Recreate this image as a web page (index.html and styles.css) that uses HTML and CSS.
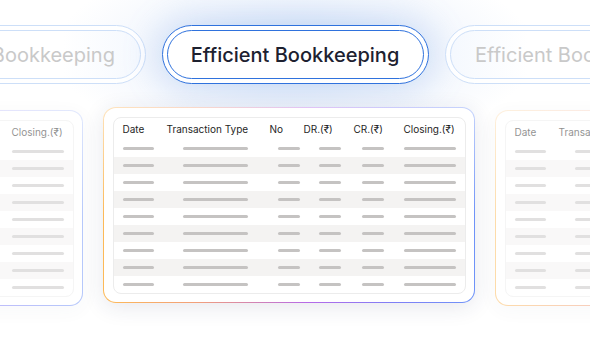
FILE: index.html
```html
<!DOCTYPE html>
<html lang="en">
<head>
<meta charset="utf-8">
<title>Efficient Bookkeeping</title>
<link rel="stylesheet" href="styles.css">
</head>
<body>
<div class="stage">
  <div class="pills">
    <div class="pill"><div class="pill-in">Efficient Bookkeeping</div></div>
    <div class="pill pill--active"><div class="pill-in">Efficient Bookkeeping</div></div>
    <div class="pill"><div class="pill-in">Efficient Bookkeeping</div></div>
  </div>

  <div class="cards">
    <div class="card card--side">
      <div class="sheet">
        <div class="grid head"><span>Date</span><span>Transaction Type</span><span>No</span><span>DR.(₹)</span><span>CR.(₹)</span><span>Closing.(₹)</span></div>
        <div class="grid row"><i class="bar b1"></i><i class="bar b2"></i><i class="bar b3"></i><i class="bar b4"></i><i class="bar b5"></i><i class="bar b6"></i></div>
        <div class="grid row"><i class="bar b1"></i><i class="bar b2"></i><i class="bar b3"></i><i class="bar b4"></i><i class="bar b5"></i><i class="bar b6"></i></div>
        <div class="grid row"><i class="bar b1"></i><i class="bar b2"></i><i class="bar b3"></i><i class="bar b4"></i><i class="bar b5"></i><i class="bar b6"></i></div>
        <div class="grid row"><i class="bar b1"></i><i class="bar b2"></i><i class="bar b3"></i><i class="bar b4"></i><i class="bar b5"></i><i class="bar b6"></i></div>
        <div class="grid row"><i class="bar b1"></i><i class="bar b2"></i><i class="bar b3"></i><i class="bar b4"></i><i class="bar b5"></i><i class="bar b6"></i></div>
        <div class="grid row"><i class="bar b1"></i><i class="bar b2"></i><i class="bar b3"></i><i class="bar b4"></i><i class="bar b5"></i><i class="bar b6"></i></div>
        <div class="grid row"><i class="bar b1"></i><i class="bar b2"></i><i class="bar b3"></i><i class="bar b4"></i><i class="bar b5"></i><i class="bar b6"></i></div>
        <div class="grid row"><i class="bar b1"></i><i class="bar b2"></i><i class="bar b3"></i><i class="bar b4"></i><i class="bar b5"></i><i class="bar b6"></i></div>
        <div class="grid row"><i class="bar b1"></i><i class="bar b2"></i><i class="bar b3"></i><i class="bar b4"></i><i class="bar b5"></i><i class="bar b6"></i></div>
      </div>
    </div>

    <div class="card card--main">
      <div class="sheet">
        <div class="grid head"><span>Date</span><span>Transaction Type</span><span>No</span><span>DR.(₹)</span><span>CR.(₹)</span><span>Closing.(₹)</span></div>
        <div class="grid row"><i class="bar b1"></i><i class="bar b2"></i><i class="bar b3"></i><i class="bar b4"></i><i class="bar b5"></i><i class="bar b6"></i></div>
        <div class="grid row"><i class="bar b1"></i><i class="bar b2"></i><i class="bar b3"></i><i class="bar b4"></i><i class="bar b5"></i><i class="bar b6"></i></div>
        <div class="grid row"><i class="bar b1"></i><i class="bar b2"></i><i class="bar b3"></i><i class="bar b4"></i><i class="bar b5"></i><i class="bar b6"></i></div>
        <div class="grid row"><i class="bar b1"></i><i class="bar b2"></i><i class="bar b3"></i><i class="bar b4"></i><i class="bar b5"></i><i class="bar b6"></i></div>
        <div class="grid row"><i class="bar b1"></i><i class="bar b2"></i><i class="bar b3"></i><i class="bar b4"></i><i class="bar b5"></i><i class="bar b6"></i></div>
        <div class="grid row"><i class="bar b1"></i><i class="bar b2"></i><i class="bar b3"></i><i class="bar b4"></i><i class="bar b5"></i><i class="bar b6"></i></div>
        <div class="grid row"><i class="bar b1"></i><i class="bar b2"></i><i class="bar b3"></i><i class="bar b4"></i><i class="bar b5"></i><i class="bar b6"></i></div>
        <div class="grid row"><i class="bar b1"></i><i class="bar b2"></i><i class="bar b3"></i><i class="bar b4"></i><i class="bar b5"></i><i class="bar b6"></i></div>
        <div class="grid row"><i class="bar b1"></i><i class="bar b2"></i><i class="bar b3"></i><i class="bar b4"></i><i class="bar b5"></i><i class="bar b6"></i></div>
      </div>
    </div>

    <div class="card card--side">
      <div class="sheet">
        <div class="grid head"><span>Date</span><span>Transaction Type</span><span>No</span><span>DR.(₹)</span><span>CR.(₹)</span><span>Closing.(₹)</span></div>
        <div class="grid row"><i class="bar b1"></i><i class="bar b2"></i><i class="bar b3"></i><i class="bar b4"></i><i class="bar b5"></i><i class="bar b6"></i></div>
        <div class="grid row"><i class="bar b1"></i><i class="bar b2"></i><i class="bar b3"></i><i class="bar b4"></i><i class="bar b5"></i><i class="bar b6"></i></div>
        <div class="grid row"><i class="bar b1"></i><i class="bar b2"></i><i class="bar b3"></i><i class="bar b4"></i><i class="bar b5"></i><i class="bar b6"></i></div>
        <div class="grid row"><i class="bar b1"></i><i class="bar b2"></i><i class="bar b3"></i><i class="bar b4"></i><i class="bar b5"></i><i class="bar b6"></i></div>
        <div class="grid row"><i class="bar b1"></i><i class="bar b2"></i><i class="bar b3"></i><i class="bar b4"></i><i class="bar b5"></i><i class="bar b6"></i></div>
        <div class="grid row"><i class="bar b1"></i><i class="bar b2"></i><i class="bar b3"></i><i class="bar b4"></i><i class="bar b5"></i><i class="bar b6"></i></div>
        <div class="grid row"><i class="bar b1"></i><i class="bar b2"></i><i class="bar b3"></i><i class="bar b4"></i><i class="bar b5"></i><i class="bar b6"></i></div>
        <div class="grid row"><i class="bar b1"></i><i class="bar b2"></i><i class="bar b3"></i><i class="bar b4"></i><i class="bar b5"></i><i class="bar b6"></i></div>
        <div class="grid row"><i class="bar b1"></i><i class="bar b2"></i><i class="bar b3"></i><i class="bar b4"></i><i class="bar b5"></i><i class="bar b6"></i></div>
      </div>
    </div>
  </div>
</div>
</body>
</html>
```

FILE: styles.css
```css
* { box-sizing: border-box; }

html, body {
  margin: 0;
  padding: 0;
}

body {
  width: 590px;
  height: 340px;
  overflow: hidden;
  background:
    radial-gradient(ellipse 240px 100px at 295px 52px, rgba(212, 226, 248, 0.95) 0%, rgba(233, 240, 251, 0.6) 55%, rgba(255, 255, 255, 0) 100%),
    #ffffff;
  font-family: Inter, "Noto Sans", "DejaVu Sans", sans-serif;
}

.stage {
  width: 590px;
  height: 340px;
  overflow: hidden;
  padding-top: 25px;
}

/* ---------- pills ---------- */
.pills {
  display: flex;
  justify-content: center;
  gap: 16px;
  height: 59px;
}

.pill {
  flex: 0 0 267px;
  height: 59px;
  border: 1px solid #cddff8;
  border-radius: 30px;
  padding: 4px;
  background: rgba(255, 255, 255, 0.85);
}

.pill-in {
  height: 100%;
  border: 1px solid #cddff8;
  border-radius: 26px;
  display: flex;
  align-items: center;
  justify-content: center;
  font-size: 20px;
  font-weight: 400;
  color: #c9c9c9;
  white-space: nowrap;
  background: linear-gradient(to right, rgba(244, 248, 254, 0.9), #ffffff 30%, #ffffff 70%, rgba(244, 248, 254, 0.9));
}

.pill--active {
  border-color: #2f72dd;
  background: #ffffff;
  box-shadow: 0 0 34px 6px rgba(120, 160, 230, 0.28);
}

.pill--active .pill-in {
  border-color: #2f72dd;
  color: #1d2130;
  font-weight: 500;
  background: #ffffff;
}

/* ---------- cards ---------- */
.cards {
  display: flex;
  justify-content: center;
  align-items: flex-start;
  gap: 20px;
  margin-top: 23px;
  padding-right: 12px;
}

.card {
  flex: 0 0 372px;
  border: 1.5px solid transparent;
  border-radius: 13px;
  padding: 8.5px;
  background:
    linear-gradient(#ffffff, #ffffff) padding-box,
    linear-gradient(to bottom, rgba(255, 255, 255, 0.6) 0%, rgba(255, 255, 255, 0) 55%) border-box,
    linear-gradient(to right, #fdba58 0%, #f2a07a 25%, #b66ae8 55%, #7f7ff6 78%, #6f93f8 100%) border-box;
}

.card--main {
  box-shadow: 0 4px 22px rgba(40, 50, 90, 0.11);
}

.card--side {
  margin-top: 3px;
  opacity: 0.5;
  box-shadow: 0 4px 18px rgba(40, 50, 90, 0.05);
}

.sheet {
  border: 1px solid #ececec;
  border-radius: 8px;
  overflow: hidden;
  background: #ffffff;
}

.grid {
  display: grid;
  grid-template-columns: 44px 103px 34px 50px 50px 1fr;
  padding-left: 9px;
  align-items: center;
}

.head {
  height: 22px;
  font-size: 10px;
  font-weight: 400;
  color: #1f1f1f;
  white-space: nowrap;
}

.row {
  height: 17px;
}

.row:nth-child(odd) {
  background: #f4f3f2;
}

.bar {
  display: block;
  height: 3px;
  border-radius: 2px;
  background: #c5c3c2;
}

.b1 { width: 31px; margin-left: 0; }
.b2 { width: 65px; margin-left: 16px; }
.b3 { width: 22px; margin-left: 8px; }
.b4 { width: 22px; margin-left: 15px; }
.b5 { width: 22px; margin-left: 8px; }
.b6 { width: 52px; margin-left: 0; }
```
